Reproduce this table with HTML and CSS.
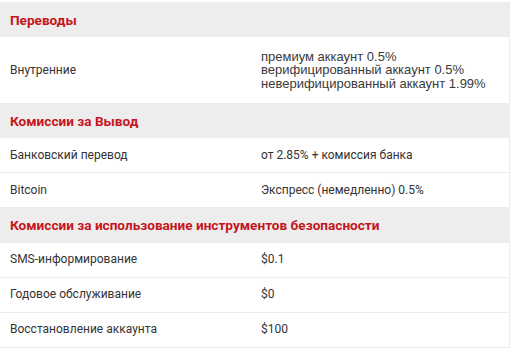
FILE: index.html
```html
<!DOCTYPE html>
<html lang="ru">
<head>
<meta charset="utf-8">
<link rel="stylesheet" href="styles.css">
</head>
<body>
<table class="fees">
  <tr class="head"><th colspan="2">Переводы</th></tr>
  <tr class="multi"><td>Внутренние</td><td class="list">премиум аккаунт 0.5%<br>верифицированный аккаунт 0.5%<br>неверифицированный аккаунт 1.99%</td></tr>
  <tr class="head"><th colspan="2">Комиссии за Вывод</th></tr>
  <tr><td>Банковский перевод</td><td>от 2.85% + комиссия банка</td></tr>
  <tr><td>Bitcoin</td><td>Экспресс (немедленно) 0.5%</td></tr>
  <tr class="head"><th colspan="2">Комиссии за использование инструментов безопасности</th></tr>
  <tr><td>SMS-информирование</td><td>$0.1</td></tr>
  <tr><td>Годовое обслуживание</td><td>$0</td></tr>
  <tr><td>Восстановление аккаунта</td><td>$100</td></tr>
</table>
</body>
</html>
```

FILE: styles.css
```css
html, body {
  margin: 0;
  background: #fff;
}
body {
  padding-top: 2px;
  font-family: Roboto, "Liberation Sans", sans-serif;
  font-size: 12px;
  color: #333;
}
.fees {
  width: 510px;
  border-collapse: collapse;
  border-right: 1px solid #ececec;
}
.fees th {
  background: #ededed;
  color: #c4161c;
  font-weight: bold;
  font-size: 13.6px;
  text-align: left;
  height: 35px;
  padding: 0 10px;
  box-sizing: border-box;
}
.fees td {
  height: 34px;
  padding: 0 10px;
  border-bottom: 1px solid #ececec;
  vertical-align: middle;
  line-height: 13px;
}
.fees td:first-child {
  width: 231px;
}
.fees tr.multi td {
  height: 66px;
  border-bottom: none;
}
.fees td.list {
  font-family: "Liberation Sans", Arial, sans-serif;
  font-size: 13px;
  line-height: 13.5px;
  color: #3a3a3a;
}
```
